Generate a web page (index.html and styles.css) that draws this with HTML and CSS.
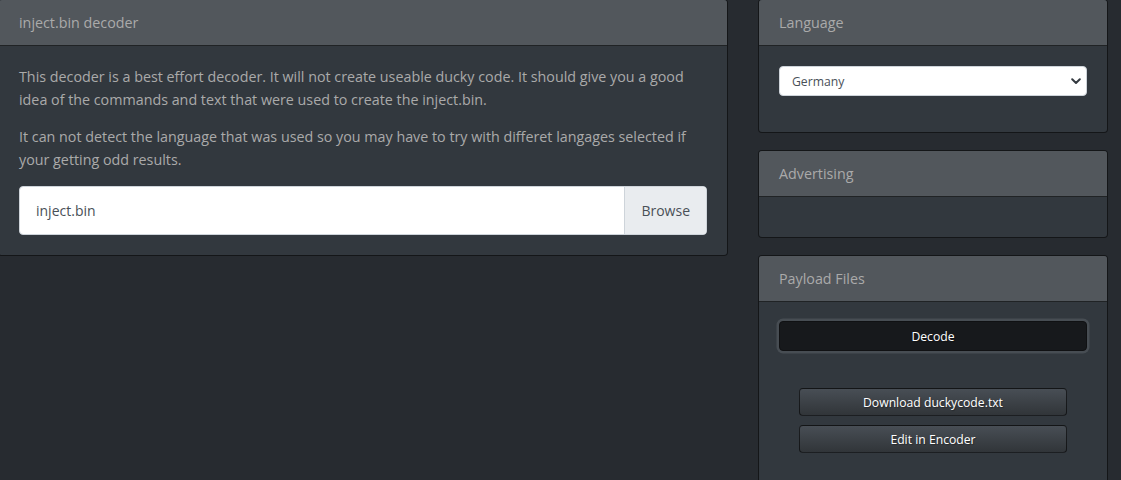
FILE: index.html
```html
<!DOCTYPE html>
<html lang="en">
<head>
    <meta charset="UTF-8">
    <meta name="viewport" content="width=device-width, initial-scale=1.0">
    <title>inject.bin decoder</title>
    <link rel="stylesheet" href="styles.css">
</head>
<body>
    <div class="page">
        <div class="main">
            <div class="card">
                <div class="card-header">inject.bin decoder</div>
                <div class="card-body">
                    <p>This decoder is a best effort decoder. It will not create useable ducky code. It should give you a good idea of the commands and text that were used to create the inject.bin.</p>
                    <p>It can not detect the language that was used so you may have to try with differet langages selected if your getting odd results.</p>
                    <div class="file-input">
                        <span class="file-name">inject.bin</span>
                        <span class="file-browse">Browse</span>
                    </div>
                </div>
            </div>
        </div>

        <div class="sidebar">
            <div class="card">
                <div class="card-header">Language</div>
                <div class="card-body">
                    <div class="select-wrap">
                        <select id="language">
                            <option>Germany</option>
                            <option>United States</option>
                            <option>United Kingdom</option>
                        </select>
                        <svg class="chevron" width="10" height="7" viewBox="0 0 10 7">
                            <path d="M1.2 1.3 L5 5 L8.8 1.3" fill="none" stroke="#343a40" stroke-width="2" stroke-linecap="round" stroke-linejoin="round"/>
                        </svg>
                    </div>
                </div>
            </div>

            <div class="card">
                <div class="card-header">Advertising</div>
                <div class="card-body"></div>
            </div>

            <div class="card">
                <div class="card-header">Payload Files</div>
                <div class="card-body">
                    <button class="btn btn-decode">Decode</button>
                    <div class="file-actions">
                        <button class="btn">Download duckycode.txt</button>
                        <button class="btn">Edit in Encoder</button>
                    </div>
                </div>
            </div>
        </div>
    </div>
</body>
</html>
```

FILE: styles.css
```css
body {
    margin: 0;
    background-color: #272b30;
    color: #aaa;
    font-family: "Open Sans", "Noto Sans", sans-serif;
    font-size: 14.3px;
}

.page {
    display: flex;
    align-items: flex-start;
    gap: 30px;
    margin: -1px 0 0 -2px;
}

.main {
    width: 730px;
    flex-shrink: 0;
}

.sidebar {
    width: 350px;
    flex-shrink: 0;
}

.card {
    background-color: #32383e;
    border: 1px solid rgba(0, 0, 0, 0.6);
    border-radius: 4px;
    margin-bottom: 17px;
}

.card-header {
    padding: 12px 20px;
    line-height: 21px;
    background-color: #52575c;
    border-bottom: 1px solid rgba(0, 0, 0, 0.6);
    border-radius: 3px 3px 0 0;
}

.card-body {
    padding: 20px;
}

.card-body p {
    margin: 0 0 15px;
    line-height: 22.5px;
}

.file-input {
    display: flex;
    height: 49px;
    background-color: #fff;
    border: 1px solid #ced4da;
    border-radius: 4px;
    box-sizing: border-box;
    color: #495057;
    font-size: 14px;
    overflow: hidden;
}

.file-name {
    flex: 1;
    display: flex;
    align-items: center;
    padding-left: 16px;
}

.file-browse {
    display: flex;
    align-items: center;
    padding: 0 16px;
    background-color: #e9ecef;
    border-left: 1px solid #ced4da;
}

.select-wrap {
    position: relative;
    margin-bottom: 16px;
}

#language {
    display: block;
    width: 100%;
    height: 30px;
    padding: 0 12px;
    border: 1px solid #ced4da;
    border-radius: 4px;
    background-color: #fff;
    color: #495057;
    font-family: inherit;
    font-size: 12.2px;
    appearance: none;
    -webkit-appearance: none;
    outline: none;
}

.chevron {
    position: absolute;
    right: 6px;
    top: 12px;
    pointer-events: none;
}

.btn {
    display: block;
    height: 28px;
    width: 268px;
    margin: 0 auto;
    padding: 0;
    font-family: inherit;
    font-size: 12.2px;
    color: #fff;
    text-shadow: 1px 1px 1px rgba(0, 0, 0, 0.3);
    background-image: linear-gradient(#484e55, #3a3f44 60%, #313539);
    border: 1px solid rgba(0, 0, 0, 0.6);
    border-radius: 4px;
    cursor: pointer;
}

.btn-decode {
    width: 100%;
    height: 30px;
    margin-top: -1px;
    background: #17191c;
    border-color: #101113;
    box-shadow: 0 0 0 2.5px #474d53;
}

.file-actions {
    display: flex;
    flex-direction: column;
    gap: 9px;
    margin-top: 37px;
    padding-bottom: 40px;
}
```
